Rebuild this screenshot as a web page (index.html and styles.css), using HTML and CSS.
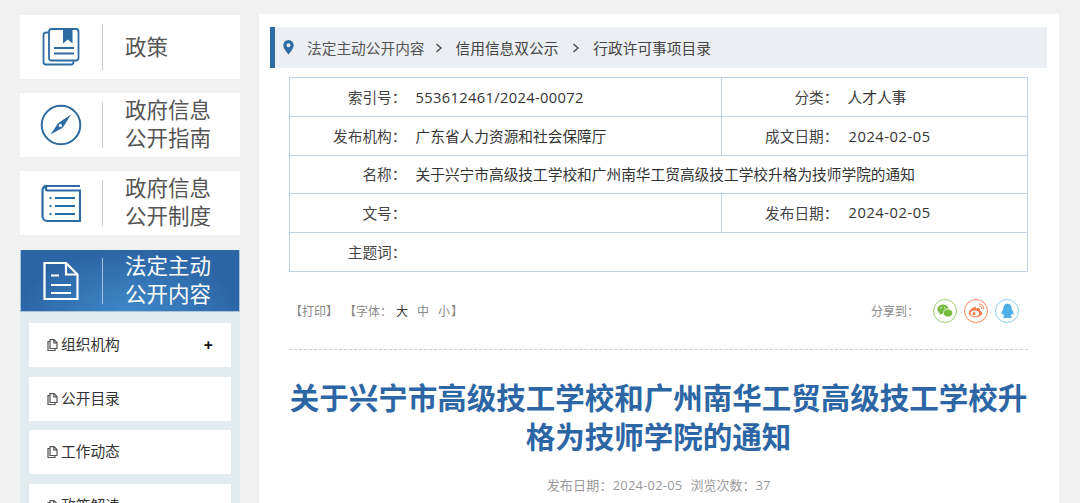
FILE: index.html
```html
<!DOCTYPE html>
<html lang="zh-CN">
<head>
<meta charset="utf-8">
<title>关于兴宁市高级技工学校和广州南华工贸高级技工学校升格为技师学院的通知</title>
<link rel="stylesheet" href="styles.css">
</head>
<body>
<div class="page">
  <aside class="sidebar">
    <a class="nav-card">
      <span class="nav-icon"><svg width="38" height="38" viewBox="0 0 38 38" fill="none" stroke="#2d6ba3" stroke-width="1.8"><path d="M6 4.500H4a2.500 2.500 0 0 0-2.500 2.500V34a2.500 2.500 0 0 0 2.500 2.500h25a2.500 2.500 0 0 0 2.500-2.500v-1.500"/><rect x="7" y="1" width="29.500" height="31.500" rx="2.500" fill="#fff"/><path d="M21 1h9.500v14.500l-4.700-4-4.800 4z" fill="#2d6ba3" stroke="none"/><path d="M12 20h20M12 25.500h20"/></svg></span>
      <span class="nav-label nav-label-single">政策</span>
    </a>
    <a class="nav-card">
      <span class="nav-icon"><svg width="42" height="42" viewBox="0 0 42 42" fill="none"><circle cx="21" cy="21" r="19.300" stroke="#2d6ba3" stroke-width="2"/><path d="M31 10.500L22.800 23.800 18 19.200z" fill="#2d6ba3"/><path d="M10.500 30.500L18 19.200l4.800 4.600z" fill="#2d6ba3"/><circle cx="20.400" cy="21.500" r="1.600" fill="#fff"/></svg></span>
      <span class="nav-label">政府信息<br>公开指南</span>
    </a>
    <a class="nav-card">
      <span class="nav-icon"><svg width="40" height="40" viewBox="0 0 40 40" fill="none" stroke="#2d6ba3" stroke-width="2.200"><path d="M39 3H6a4 4 0 0 0-4.500 4v26a5 5 0 0 0 5 5H39V7.500H6.500a2.300 2.300 0 0 1 0-4.500"/><path d="M8.500 15h2M8.500 23h2M8.500 31h2M14 15h20M14 23h20M14 31h20"/></svg></span>
      <span class="nav-label">政府信息<br>公开制度</span>
    </a>
    <a class="nav-card nav-card-active">
      <span class="nav-icon"><svg width="36" height="38" viewBox="0 0 36 38" fill="none" stroke="#fff" stroke-width="2.200"><path d="M1.500 1h21.500l11.500 11.500V37H1.500z"/><path d="M23 1v11.500h11.500M8 13.500h8M8 23h20M8 31h20"/></svg></span>
      <span class="nav-label">法定主动<br>公开内容</span>
    </a>
    <ul class="submenu">
      <li class="sub-item"><svg class="doc-icon" width="11" height="12" viewBox="0 0 11 12" fill="none" stroke="#555" stroke-width="1.200"><path d="M3 2.500H1v9h7V9.500"/><path d="M3 .6h4l3 3v5.900H3zM6.800.6v3.200H10"/></svg><span class="sub-text">组织机构</span><b class="sub-plus">+</b></li>
      <li class="sub-item"><svg class="doc-icon" width="11" height="12" viewBox="0 0 11 12" fill="none" stroke="#555" stroke-width="1.200"><path d="M3 2.500H1v9h7V9.500"/><path d="M3 .6h4l3 3v5.900H3zM6.800.6v3.200H10"/></svg><span class="sub-text">公开目录</span></li>
      <li class="sub-item"><svg class="doc-icon" width="11" height="12" viewBox="0 0 11 12" fill="none" stroke="#555" stroke-width="1.200"><path d="M3 2.500H1v9h7V9.500"/><path d="M3 .6h4l3 3v5.900H3zM6.800.6v3.200H10"/></svg><span class="sub-text">工作动态</span></li>
      <li class="sub-item"><svg class="doc-icon" width="11" height="12" viewBox="0 0 11 12" fill="none" stroke="#555" stroke-width="1.200"><path d="M3 2.500H1v9h7V9.500"/><path d="M3 .6h4l3 3v5.900H3zM6.800.6v3.200H10"/></svg><span class="sub-text">政策解读</span></li>
    </ul>
  </aside>

  <main class="content">
    <nav class="crumbs">
      <svg class="pin" width="11" height="15" viewBox="0 0 11 15"><path d="M5.500 0A5.200 5.200 0 0 0 .3 5.200C.3 8.800 5.500 14.500 5.500 14.500s5.200-5.700 5.200-9.300A5.200 5.200 0 0 0 5.500 0zm0 7.200a2 2 0 1 1 0-4 2 2 0 0 1 0 4z" fill="#2d6ba3"/></svg>
      <span class="crumb-first">法定主动公开内容</span>
      <svg class="chev" width="8" height="10" viewBox="0 0 8 10" fill="none" stroke="#444" stroke-width="1.300"><path d="M1.500 1l4.500 4-4.500 4"/></svg>
      <span class="crumb">信用信息双公示</span>
      <svg class="chev chev-wide" width="8" height="10" viewBox="0 0 8 10" fill="none" stroke="#444" stroke-width="1.300"><path d="M1.500 1l4.500 4-4.500 4"/></svg>
      <span class="crumb">行政许可事项目录</span>
    </nav>

    <table class="meta">
      <colgroup><col class="c1"><col class="c2"><col class="c3"><col class="c4"></colgroup>
      <tr><th>索引号：</th><td class="num">553612461/2024-00072</td><th>分类：</th><td>人才人事</td></tr>
      <tr><th>发布机构：</th><td>广东省人力资源和社会保障厅</td><th>成文日期：</th><td class="date">2024-02-05</td></tr>
      <tr class="row-up"><th>名称：</th><td colspan="3">关于兴宁市高级技工学校和广州南华工贸高级技工学校升格为技师学院的通知</td></tr>
      <tr class="row-up"><th>文号：</th><td></td><th>发布日期：</th><td class="date">2024-02-05</td></tr>
      <tr class="row-up"><th>主题词：</th><td colspan="3"></td></tr>
    </table>

    <div class="tools">
      <div class="tools-left"><span>【打印】</span><span>【字体：<em class="size-on">大</em><em>中</em><em>小</em>】</span></div>
      <div class="share">
        <span class="share-label">分享到：</span>
        <span class="share-btn wx"><svg width="16" height="14" viewBox="0 0 16 14"><ellipse cx="6" cy="5.300" rx="5.600" ry="4.800" fill="#78bb3c"/><path d="M3 8.500L2.500 11l3-1.800z" fill="#78bb3c"/><ellipse cx="11" cy="9" rx="4.700" ry="4" fill="#78bb3c" stroke="#fff" stroke-width=".8"/><circle cx="4.200" cy="3.800" r=".7" fill="#fff"/><circle cx="7.700" cy="3.800" r=".7" fill="#fff"/></svg></span>
        <span class="share-btn wb"><svg width="17" height="15" viewBox="0 0 17 15" fill="none"><path d="M7 3.700C3.500 5 .8 7.600.8 10c0 2.600 3 4.300 6.600 4.300 3.800 0 6.800-2 6.800-4.300 0-1.500-1.500-2-2.300-2.300.5-1.400.3-2.700-1.700-2.700-.9 0-2 .4-2.400.6.300-1.100 0-2.700-.8-1.900z" fill="#fb7a4d"/><ellipse cx="6.800" cy="10.400" rx="4.300" ry="2.800" fill="#fff"/><circle cx="6" cy="10.700" r="1.600" fill="#fb7a4d"/><path d="M11 1.200c2.500-.5 5 1.500 4.700 4.700M11.300 3.200c1.300-.3 2.700.8 2.500 2.400" stroke="#fb7a4d" stroke-width="1"/></svg></span>
        <span class="share-btn qq"><svg width="13" height="16" viewBox="0 0 13 16"><path d="M6.500.5C3.700.5 2.300 2.700 2.300 5.200c0 1-.3 1.400-.8 2.300C.7 9 .2 10.500.6 11.300c.3.400 1 0 1.400-.8.200 1.200.8 2 1.500 2.600-.8.300-1.500.8-1.200 1.400.4.700 2.800.6 4.200.2 1.400.4 3.800.5 4.200-.2.300-.6-.4-1.100-1.200-1.400.7-.6 1.300-1.400 1.500-2.600.4.800 1.100 1.200 1.400.8.400-.8-.1-2.300-.9-3.800-.5-.9-.8-1.300-.8-2.300C10.700 2.700 9.300.5 6.500.5z" fill="#4fb0e8"/></svg></span>
      </div>
    </div>

    <h1 class="title">关于兴宁市高级技工学校和广州南华工贸高级技工学校升格为技师学院的通知</h1>
    <p class="pub"><span class="pub-date">发布日期：2024-02-05</span><span>浏览次数：37</span></p>
  </main>
</div>
</body>
</html>
```
FILE: styles.css
```css
html, body {
  margin: 0;
  padding: 0;
  height: 503px;
  overflow: hidden;
  background: #f1f1f1;
  font-family: "Open Sans", "Noto Sans CJK SC", sans-serif;
}
.page {
  display: flex;
  align-items: flex-start;
  padding: 14px 0 0 20px;
}
.sidebar {
  width: 220px;
  flex: none;
  margin-right: 19px;
  padding-top: 1px;
}
.nav-card {
  display: flex;
  align-items: center;
  height: 64px;
  margin-bottom: 14px;
  background: #fff;
  color: #555;
  font-size: 21.500px;
  line-height: 28px;
}
.nav-icon {
  width: 82px;
  height: 46px;
  flex: none;
  margin-right: 22px;
  display: flex;
  align-items: center;
  justify-content: center;
  border-right: 1px solid #ccc;
}
.nav-label {
  padding-bottom: 3px;
}
.nav-card .nav-label-single {
  padding-bottom: 0;
}
.nav-card-active {
  height: 62px;
  margin: 15px 0 0;
  color: #fff;
  background: radial-gradient(ellipse 110px 60px at 50% 100%, #3f88c8, #2c65a5);
  border: 1px solid #a9c4dd;
  border-width: 0 1px 1px;
  box-sizing: border-box;
}
.nav-card-active .nav-label {
  padding-bottom: 1px;
}
.nav-card-active .nav-icon {
  border-right-color: #a8c2dc;
  margin-left: -1px;
}
.submenu {
  list-style: none;
  margin: 0;
  padding: 11px 9px 0;
  background: #e1ebf0;
}
.sub-item {
  display: flex;
  align-items: center;
  height: 44px;
  margin-bottom: 9.500px;
  padding: 0 18px;
  background: #fff;
  color: #333;
  font-size: 14.700px;
}
.doc-icon {
  flex: none;
  margin-right: 3px;
}
.sub-text {
  flex: 1;
  padding-bottom: 3px;
}
.sub-plus {
  font-size: 16px;
  color: #111;
}
.content {
  width: 800px;
  height: 489px;
  flex: none;
  background: #fff;
  box-sizing: border-box;
  padding: 13px 12px 0 11px;
}
.crumbs {
  display: flex;
  align-items: center;
  height: 41px;
  background: #ebeef2;
  border-left: 5px solid #2d6ba3;
  padding-left: 8px;
  color: #444;
  font-size: 14.700px;
}
.pin {
  margin-right: 13px;
}
.crumb-first {
  color: #555;
}
.chev {
  margin: 0 13px 0 10px;
}
.chev-wide {
  margin: 0 13px 0 14px;
}
.meta {
  width: 739px;
  margin: 9px 0 0 19px;
  border-collapse: collapse;
  table-layout: fixed;
  font-size: 14.700px;
  color: #333;
}
.meta .c1 { width: 126px; }
.meta .c2 { width: 306px; }
.meta .c3 { width: 126px; }
.meta th, .meta td {
  height: 37.800px;
  padding: 0;
  border: 1px solid #bcd2e6;
  font-weight: 400;
  white-space: nowrap;
}
.meta .row-up th, .meta .row-up td {
  height: 35.800px;
  padding-bottom: 2px;
}
.meta th {
  border-right: 0;
  text-align: right;
  color: #444;
  padding-right: 9px;
}
.meta td {
  border-left: 0;
}
.meta .num {
  letter-spacing: .35px;
}
.meta .date {
  letter-spacing: .55px;
  padding-left: 1px;
}
.tools {
  display: flex;
  justify-content: space-between;
  align-items: center;
  margin: 26px 28px 0 20px;
  height: 26px;
  color: #888;
  font-size: 12px;
}
.tools-left {
  display: flex;
  gap: 6px;
}
.tools-left em {
  font-style: normal;
  margin-right: 9px;
}
.tools-left em.size-on {
  color: #333;
  margin-left: 4px;
}
.tools-left em:last-child {
  margin-right: 1px;
}
.share {
  display: flex;
  align-items: center;
  gap: 7px;
}
.share-label {
  margin-right: 7px;
}
.share-btn {
  width: 24px;
  height: 24px;
  border-radius: 50%;
  border: 1px solid;
  display: flex;
  align-items: center;
  justify-content: center;
  box-sizing: border-box;
}
.wx { border-color: #9ad06e; }
.wb { border-color: #fb8a5f; }
.qq { border-color: #8acdf5; }
.title {
  margin: 25px 19px 0;
  padding-top: 28px;
  border-top: 1px dashed #ccc;
  text-align: center;
  color: #2c66a5;
  font-size: 29.500px;
  line-height: 39px;
  font-weight: 700;
}
.pub {
  margin: 20px 0 0;
  text-align: center;
  color: #999;
  font-size: 13px;
  line-height: 18px;
}
.pub-date {
  letter-spacing: .2px;
}
.pub span + span {
  margin-left: 8px;
}
```
